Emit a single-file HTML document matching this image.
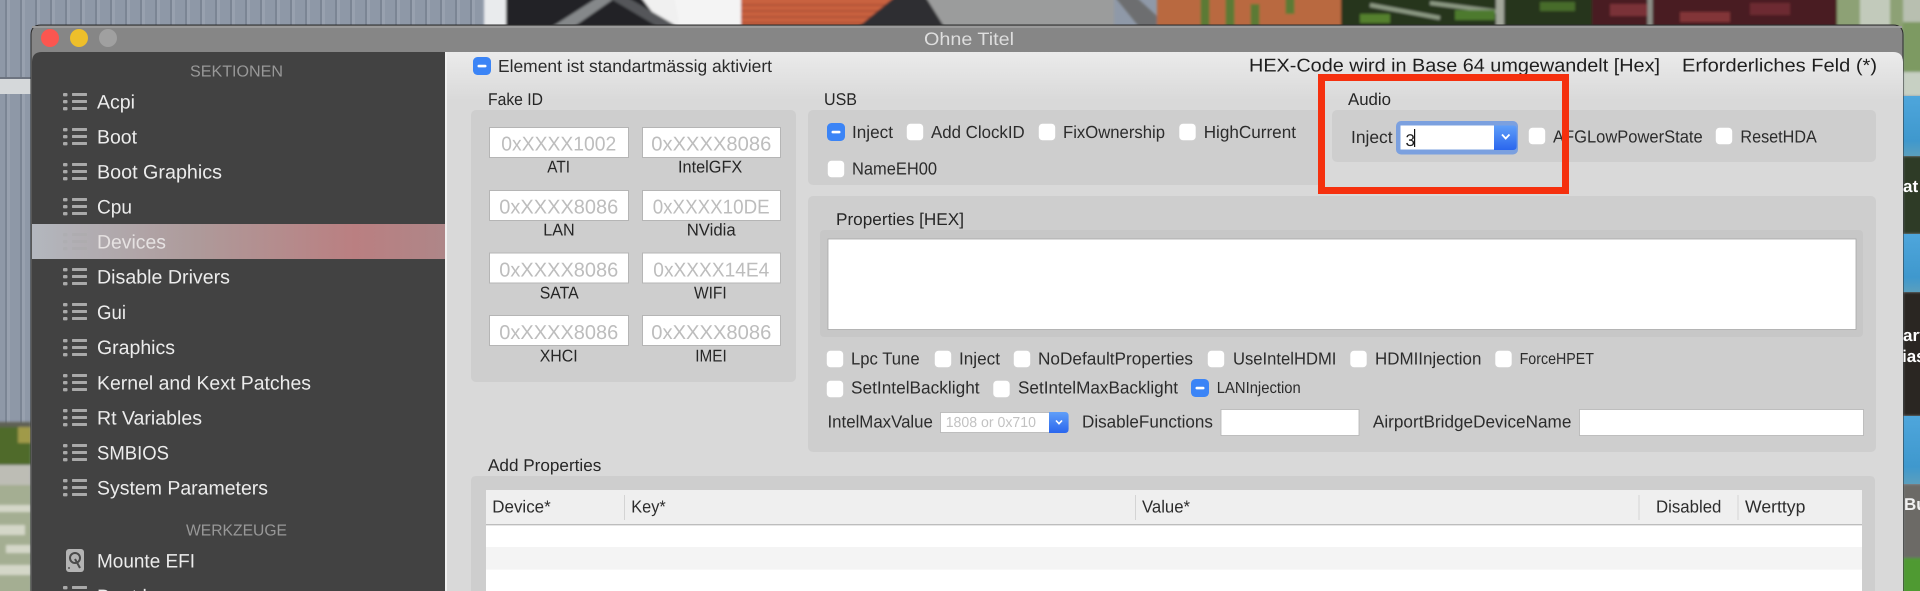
<!DOCTYPE html>
<html lang="de">
<head>
<meta charset="utf-8">
<title>Ohne Titel</title>
<style>
html,body{margin:0;padding:0;background:#8b96a5;width:1920px;height:591px;overflow:hidden}
svg{display:block;position:absolute;left:0;top:0}
text{font-family:"Liberation Sans",sans-serif;text-rendering:geometricPrecision}
.s{font-size:19.5px;fill:#ececec}
.h{font-size:16px;fill:#989898}
.b{font-size:17px;fill:#262626}
.l{font-size:18.5px;fill:#1e1e1e}
.p{font-size:20px;fill:#bdbdbd}
.c{font-size:17.5px;fill:#2c2c2c}
</style>
</head>
<body>
<svg width="1920" height="591" viewBox="0 0 1920 591" xmlns="http://www.w3.org/2000/svg">
<defs>
<pattern id="st" width="15" height="600" patternUnits="userSpaceOnUse" x="-10">
<rect width="15" height="600" fill="#8e98a7"/>
<rect x="0" width="2" height="600" fill="#7b8594"/>
<rect x="2" width="3" height="600" fill="#98a1af"/>
</pattern>
<filter id="bl" x="-20%" y="-20%" width="140%" height="140%"><feGaussianBlur stdDeviation="1.2"/></filter>
<linearGradient id="sel" x1="0" x2="1" y1="0" y2="0">
<stop offset="0" stop-color="#b3b7be"/><stop offset=".4" stop-color="#ae9a9a"/><stop offset=".78" stop-color="#ba7f81"/><stop offset="1" stop-color="#ae8688"/>
</linearGradient>
<linearGradient id="top" x1="0" x2="0" y1="0" y2="1">
<stop offset="0" stop-color="#ebebeb"/><stop offset=".09" stop-color="#d9d9d9"/><stop offset="1" stop-color="#d9d9d9"/>
</linearGradient>
<linearGradient id="btn" x1="0" x2="0" y1="0" y2="1">
<stop offset="0" stop-color="#5f9ef8"/><stop offset="1" stop-color="#2a66ee"/>
</linearGradient>
<linearGradient id="sky" x1="0" x2="0" y1="0" y2="1">
<stop offset="0" stop-color="#4ea6dc"/><stop offset=".75" stop-color="#3f98cd"/><stop offset="1" stop-color="#5b9fbe"/>
</linearGradient>
<symbol id="cb" width="18" height="18" viewBox="0 0 18 18" overflow="visible">
<rect x=".5" y=".5" width="17" height="17" rx="4" fill="#fff" stroke="#d0d0d0" stroke-width=".6"/>
</symbol>
<symbol id="cbb" width="18" height="18" viewBox="0 0 18 18" overflow="visible">
<rect width="18" height="18" rx="4.5" fill="#3b84f6"/>
<rect x="4.5" y="7.8" width="9" height="2.6" rx="1.2" fill="#fff"/>
</symbol>
<symbol id="li" width="24" height="20" viewBox="0 0 24 20" overflow="visible">
<g fill="#a9a9a9">
<rect x="0" y="1" width="4.5" height="3.4" rx="1"/><rect x="9" y="1" width="15" height="3" rx=".6"/>
<rect x="0" y="8" width="4.5" height="3.4" rx="1"/><rect x="9" y="8" width="15" height="3" rx=".6"/>
<rect x="0" y="15" width="4.5" height="3.4" rx="1"/><rect x="9" y="15" width="15" height="3" rx=".6"/>
</g>
</symbol>
</defs>

<!-- photo background -->
<rect width="1920" height="591" fill="#8f99a8"/>
<rect width="484" height="426" fill="url(#st)"/>
<rect x="0" y="79" width="31" height="15" fill="#d5d8da"/>
<rect x="0" y="77" width="31" height="2" fill="#6d7480"/>
<g filter="url(#bl)">
<rect x="484" y="-4" width="24" height="32" fill="#e9ebed"/>
<rect x="506" y="-4" width="236" height="32" fill="#232325"/>
<rect x="674" y="-4" width="70" height="32" fill="#f4f4f4"/>
<path d="M640 -4H674L680 28H664Z" fill="#f0f0f0"/>
<path d="M550 28L600 -4H618L572 28Z" fill="#85888a"/>
<path d="M606 -4H625L680 28H660Z" fill="#55575a"/>
<path d="M741 -4H900L857 28H741Z" fill="#c9623f"/>
<path d="M741 5H895M741 11H887M741 17H875M741 23H862" stroke="#a84d30" stroke-width="1.5"/>
<path d="M896 -4H930L945 28H857Z" fill="#2f2f33"/>
<path d="M925 -4H1114V28H945Z" fill="#9b9c9c"/>
<path d="M1114 -4H1135L1170 28H1140Z" fill="#6d6e70"/>
<rect x="1157" y="-4" width="184" height="32" fill="#b9693f"/>
<path d="M1205 -4V28M1230 -4V28M1255 4V28M1290 -4V14" stroke="#5c7a35" stroke-width="9"/>
<rect x="1341" y="-4" width="251" height="32" fill="#25351c"/>
<path d="M1370 5L1440 18M1430 3L1500 12" stroke="#8d9a84" stroke-width="4"/>
<path d="M1500 -4V28" stroke="#a3a79b" stroke-width="8"/>
<rect x="1455" y="10" width="40" height="10" fill="#4d7a2e"/>
<rect x="1360" y="14" width="30" height="9" fill="#55802f"/>
<rect x="1540" y="2" width="35" height="9" fill="#466c2b"/>
<rect x="1592" y="-4" width="245" height="32" fill="#4a1f20"/>
<rect x="1610" y="4" width="40" height="12" fill="#7a3237"/>
<rect x="1680" y="12" width="50" height="10" fill="#823638"/>
<rect x="1750" y="3" width="40" height="12" fill="#6d2b30"/>
<path d="M1650 -4V28" stroke="#8e8f88" stroke-width="5"/>
<rect x="1837" y="-4" width="90" height="36" fill="#8da174"/>
<rect x="1860" y="-4" width="30" height="32" fill="#c2cabb"/>
</g>
<!-- right strip -->
<g filter="url(#bl)">
<rect x="1903" y="-4" width="20" height="100" fill="#7d9a62"/>
<rect x="1903" y="-4" width="20" height="26" fill="#b8bfb0"/>
<rect x="1903" y="72" width="20" height="24" fill="#c7d0c3"/>
<rect x="1903" y="156" width="20" height="78" fill="#2e3a28"/>
<rect x="1903" y="292" width="20" height="124" fill="#292623"/>
<rect x="1903" y="484" width="20" height="74" fill="#6c6a66"/>
<rect x="1903" y="558" width="20" height="36" fill="#4f9a30"/>
</g>
<rect x="1903" y="96" width="17" height="60" fill="url(#sky)"/>
<rect x="1903" y="234" width="17" height="58" fill="url(#sky)"/>
<rect x="1903" y="416" width="17" height="68" fill="url(#sky)"/>
<text x="1903" y="192" font-size="17" font-weight="700" fill="#fff">at</text>
<text x="1903" y="341" font-size="17" font-weight="700" fill="#fff">ary</text>
<text x="1902" y="362" font-size="17" font-weight="700" fill="#fff">ias</text>
<text x="1904" y="510" font-size="17" font-weight="700" fill="#f0f0f0">Bu</text>
<!-- left lower -->
<g filter="url(#bl)">
<rect x="-4" y="422" width="35" height="5" fill="#5f6155"/>
<rect x="-4" y="427" width="35" height="40" fill="#4f6a2a"/>
<rect x="18" y="427" width="13" height="16" fill="#a09a4a"/>
<rect x="-4" y="465" width="35" height="20" fill="#bdbdb5"/>
<rect x="-4" y="485" width="35" height="110" fill="#a4ae92"/>
<rect x="-4" y="505" width="35" height="7" fill="#d4d7c8"/>
<rect x="-4" y="525" width="29" height="10" fill="#d4d7c8"/>
<rect x="6" y="545" width="25" height="8" fill="#d4d7c8"/>
<rect x="-4" y="565" width="35" height="10" fill="#d4d7c8"/>
</g>

<!-- window -->
<path d="M31 591V35Q31 25 41 25H1893Q1903 25 1903 35V591Z" fill="#868686"/>
<path d="M31 591V35Q31 25 41 25H1893Q1903 25 1903 35V591" fill="none" stroke="#2b2b2b" stroke-width="1"/>
<rect x="32" y="26" width="1870" height="2" fill="#9a9a9a"/>
<circle cx="50" cy="38" r="9" fill="#fc5650"/>
<circle cx="79" cy="38" r="9" fill="#eebf2b"/>
<circle cx="108" cy="38" r="9" fill="#a0a0a0"/>
<text x="924" y="45" font-size="18" fill="#dedede" textLength="90" lengthAdjust="spacingAndGlyphs">Ohne Titel</text>

<!-- sidebar -->
<path d="M32 591V62Q32 52 42 52H445V591Z" fill="#424242"/>
<rect x="445" y="52" width="2" height="539" fill="#f0f0f0"/>
<rect x="32" y="224" width="413" height="35" fill="url(#sel)"/>
<text class="h" x="190" y="76.3" textLength="93" lengthAdjust="spacingAndGlyphs">SEKTIONEN</text>
<text class="h" x="186" y="535.7" textLength="101" lengthAdjust="spacingAndGlyphs">WERKZEUGE</text>

<use href="#li" x="63" y="92"/><text class="s" x="97" y="108.3" textLength="38" lengthAdjust="spacingAndGlyphs">Acpi</text>
<use href="#li" x="63" y="127"/><text class="s" x="97" y="143.5" textLength="40" lengthAdjust="spacingAndGlyphs">Boot</text>
<use href="#li" x="63" y="162"/><text class="s" x="97" y="178.5" textLength="125" lengthAdjust="spacingAndGlyphs">Boot Graphics</text>
<use href="#li" x="63" y="197"/><text class="s" x="97" y="213.5" textLength="35" lengthAdjust="spacingAndGlyphs">Cpu</text>
<use href="#li" x="63" y="232" opacity=".35"/><text class="s" x="97" y="248.7" textLength="69" lengthAdjust="spacingAndGlyphs" style="fill:#e6e2e2">Devices</text>
<use href="#li" x="63" y="267"/><text class="s" x="97" y="283.7" textLength="133" lengthAdjust="spacingAndGlyphs">Disable Drivers</text>
<use href="#li" x="63" y="302"/><text class="s" x="97" y="319" textLength="29" lengthAdjust="spacingAndGlyphs">Gui</text>
<use href="#li" x="63" y="338"/><text class="s" x="97" y="354" textLength="78" lengthAdjust="spacingAndGlyphs">Graphics</text>
<use href="#li" x="63" y="373"/><text class="s" x="97" y="389.3" textLength="214" lengthAdjust="spacingAndGlyphs">Kernel and Kext Patches</text>
<use href="#li" x="63" y="408"/><text class="s" x="97" y="424.3" textLength="105" lengthAdjust="spacingAndGlyphs">Rt Variables</text>
<use href="#li" x="63" y="443"/><text class="s" x="97" y="459.7" textLength="72" lengthAdjust="spacingAndGlyphs">SMBIOS</text>
<use href="#li" x="63" y="478"/><text class="s" x="97" y="494.7" textLength="171" lengthAdjust="spacingAndGlyphs">System Parameters</text>
<rect x="66" y="549" width="18" height="23" rx="3" fill="#b4b4b4"/>
<circle cx="75" cy="558" r="5" fill="none" stroke="#4a4a4a" stroke-width="2"/>
<path d="M75 559L80 568" stroke="#4a4a4a" stroke-width="2"/>
<circle cx="69" cy="568" r="1" fill="#555"/>
<text class="s" x="97" y="567.7" textLength="98" lengthAdjust="spacingAndGlyphs">Mounte EFI</text>
<use href="#li" x="63" y="585"/><text class="s" x="97" y="603">Boot.log</text>

<!-- content -->
<path d="M447 591V52H1893Q1903 52 1903 62V591Z" fill="url(#top)"/>
<use href="#cbb" x="473" y="57"/>
<text class="c" x="498" y="72" textLength="274" lengthAdjust="spacingAndGlyphs">Element ist standartmässig aktiviert</text>
<text class="l" x="1249" y="71.7" textLength="411" lengthAdjust="spacingAndGlyphs">HEX-Code wird in Base 64 umgewandelt [Hex]</text>
<text class="l" x="1682" y="71.7" textLength="195" lengthAdjust="spacingAndGlyphs">Erforderliches Feld (*)</text>

<text class="b" x="488" y="105" textLength="55" lengthAdjust="spacingAndGlyphs">Fake ID</text>
<text class="b" x="824" y="105" textLength="33" lengthAdjust="spacingAndGlyphs">USB</text>

<!-- Fake ID panel -->
<rect x="471" y="110" width="325" height="272" rx="5" fill="#cecece"/>
<g fill="#fff" stroke="#b5b5b5" stroke-width="1">
<rect x="489.5" y="127.5" width="139" height="30"/><rect x="642.5" y="127.5" width="138" height="30"/>
<rect x="489.5" y="190.5" width="139" height="30"/><rect x="642.5" y="190.5" width="138" height="30"/>
<rect x="489.5" y="253" width="139" height="30"/><rect x="642.5" y="253" width="138" height="30"/>
<rect x="489.5" y="315.5" width="139" height="30"/><rect x="642.5" y="315.5" width="138" height="30"/>
</g>
<text class="p" x="501.3" y="150.7" textLength="115" lengthAdjust="spacingAndGlyphs">0xXXXX1002</text>
<text class="p" x="651.3" y="150.7" textLength="120" lengthAdjust="spacingAndGlyphs">0xXXXX8086</text>
<text class="p" x="499.3" y="213.3" textLength="119" lengthAdjust="spacingAndGlyphs">0xXXXX8086</text>
<text class="p" x="652.7" y="213.3" textLength="117" lengthAdjust="spacingAndGlyphs">0xXXXX10DE</text>
<text class="p" x="499.3" y="276.3" textLength="119" lengthAdjust="spacingAndGlyphs">0xXXXX8086</text>
<text class="p" x="653.3" y="276.3" textLength="116" lengthAdjust="spacingAndGlyphs">0xXXXX14E4</text>
<text class="p" x="499.3" y="339" textLength="119" lengthAdjust="spacingAndGlyphs">0xXXXX8086</text>
<text class="p" x="651.3" y="339" textLength="120" lengthAdjust="spacingAndGlyphs">0xXXXX8086</text>
<text class="b" x="547.3" y="172.5" textLength="22.7" lengthAdjust="spacingAndGlyphs">ATI</text>
<text class="b" x="678" y="172.5" textLength="64.3" lengthAdjust="spacingAndGlyphs">IntelGFX</text>
<text class="b" x="543.3" y="235.5" textLength="31.4" lengthAdjust="spacingAndGlyphs">LAN</text>
<text class="b" x="686.7" y="235.5" textLength="49" lengthAdjust="spacingAndGlyphs">NVidia</text>
<text class="b" x="539.7" y="298.5" textLength="39" lengthAdjust="spacingAndGlyphs">SATA</text>
<text class="b" x="694" y="298.5" textLength="32.7" lengthAdjust="spacingAndGlyphs">WIFI</text>
<text class="b" x="539.7" y="361.3" textLength="38" lengthAdjust="spacingAndGlyphs">XHCI</text>
<text class="b" x="695.3" y="361.3" textLength="31.4" lengthAdjust="spacingAndGlyphs">IMEI</text>

<!-- USB panel -->
<rect x="808" y="110" width="514" height="75" rx="5" fill="#cecece"/>
<use href="#cbb" x="827" y="123"/><text class="c" x="852" y="138" textLength="41" lengthAdjust="spacingAndGlyphs">Inject</text>
<use href="#cb" x="906" y="123"/><text class="c" x="931" y="138" textLength="93.7" lengthAdjust="spacingAndGlyphs">Add ClockID</text>
<use href="#cb" x="1038" y="123"/><text class="c" x="1063" y="138" textLength="102" lengthAdjust="spacingAndGlyphs">FixOwnership</text>
<use href="#cb" x="1178.5" y="123"/><text class="c" x="1203.7" y="138" textLength="92.3" lengthAdjust="spacingAndGlyphs">HighCurrent</text>
<use href="#cb" x="827" y="160"/><text class="c" x="852" y="174.5" textLength="85" lengthAdjust="spacingAndGlyphs">NameEH00</text>

<!-- Audio -->
<rect x="1332" y="110" width="544" height="52" rx="5" fill="#cecece"/>
<text class="b" x="1348" y="105" textLength="43" lengthAdjust="spacingAndGlyphs">Audio</text>
<text class="c" x="1351" y="143" textLength="41.6" lengthAdjust="spacingAndGlyphs">Inject</text>
<rect x="1396" y="121" width="122" height="33.5" rx="5" fill="#7ba0df"/>
<rect x="1400.5" y="125.5" width="94" height="24" fill="#fff"/>
<path d="M1494 125.5H1513Q1516.7 125.5 1516.7 129V146Q1516.7 150 1513 150H1494Z" fill="url(#btn)"/>
<path d="M1502 134.5L1505.7 138.5L1509.5 134.5" fill="none" stroke="#fff" stroke-width="1.8"/>
<text x="1405.5" y="146" font-size="17" fill="#1e1e1e">3</text>
<rect x="1414" y="129" width="1.2" height="18" fill="#111"/>
<use href="#cb" x="1528" y="127"/><text class="c" x="1553" y="142.3" textLength="149.7" lengthAdjust="spacingAndGlyphs">AFGLowPowerState</text>
<use href="#cb" x="1715" y="127"/><text class="c" x="1740.4" y="142.3" textLength="76.4" lengthAdjust="spacingAndGlyphs">ResetHDA</text>

<!-- Properties panel -->
<rect x="808" y="196" width="1068" height="256" rx="5" fill="#cecece"/>
<text class="b" x="836" y="225" textLength="128" lengthAdjust="spacingAndGlyphs">Properties [HEX]</text>
<rect x="820" y="230" width="1043" height="107" rx="4" fill="#c7c7c7"/>
<rect x="828" y="239" width="1028" height="90.5" fill="#fff" stroke="#a8a8a8" stroke-width=".8"/>

<use href="#cb" x="826" y="350"/><text class="c" x="851" y="364.3" textLength="68.6" lengthAdjust="spacingAndGlyphs">Lpc Tune</text>
<use href="#cb" x="934" y="350"/><text class="c" x="959" y="364.3" textLength="41" lengthAdjust="spacingAndGlyphs">Inject</text>
<use href="#cb" x="1013" y="350"/><text class="c" x="1038" y="364.3" textLength="155" lengthAdjust="spacingAndGlyphs">NoDefaultProperties</text>
<use href="#cb" x="1207" y="350"/><text class="c" x="1233" y="364.3" textLength="103.4" lengthAdjust="spacingAndGlyphs">UseIntelHDMI</text>
<use href="#cb" x="1349.5" y="350"/><text class="c" x="1375" y="364.3" textLength="106.4" lengthAdjust="spacingAndGlyphs">HDMIInjection</text>
<use href="#cb" x="1494.5" y="350"/><text class="c" x="1519.6" y="364" textLength="74.4" lengthAdjust="spacingAndGlyphs" style="font-size:16px">ForceHPET</text>
<use href="#cb" x="826" y="380"/><text class="c" x="851" y="393.7" textLength="128.6" lengthAdjust="spacingAndGlyphs">SetIntelBacklight</text>
<use href="#cb" x="992.5" y="380"/><text class="c" x="1018" y="393.7" textLength="160" lengthAdjust="spacingAndGlyphs">SetIntelMaxBacklight</text>
<use href="#cbb" x="1191" y="379"/><text class="c" x="1216.8" y="393" textLength="83.9" lengthAdjust="spacingAndGlyphs" style="font-size:16px">LANInjection</text>

<text class="c" x="827.5" y="427.3" textLength="105.4" lengthAdjust="spacingAndGlyphs">IntelMaxValue</text>
<rect x="940.5" y="412.5" width="110" height="20" fill="#fff" stroke="#b5b5b5" stroke-width=".8"/>
<text x="945.7" y="427" font-size="14.5" fill="#c2c2c2" textLength="90.3" lengthAdjust="spacingAndGlyphs">1808 or 0x710</text>
<path d="M1049 412H1065Q1068.6 412 1068.6 416V429Q1068.6 433 1065 433H1049Z" fill="url(#btn)"/>
<path d="M1056 420.5L1059 423.7L1062 420.5" fill="none" stroke="#fff" stroke-width="1.6"/>
<text class="c" x="1082" y="427.3" textLength="130.9" lengthAdjust="spacingAndGlyphs">DisableFunctions</text>
<rect x="1221" y="409.5" width="138" height="26" fill="#fff" stroke="#b5b5b5" stroke-width=".8"/>
<text class="c" x="1372.9" y="427.3" textLength="198.5" lengthAdjust="spacingAndGlyphs">AirportBridgeDeviceName</text>
<rect x="1579.5" y="409.5" width="284" height="26" fill="#fff" stroke="#b5b5b5" stroke-width=".8"/>

<!-- Add Properties -->
<text class="b" x="488" y="471" textLength="113.3" lengthAdjust="spacingAndGlyphs">Add Properties</text>
<path d="M471 591V481Q471 476 476 476H1870Q1875 476 1875 481V591Z" fill="#cecece"/>
<rect x="486" y="490" width="1376" height="34" fill="#efefef"/>
<rect x="486" y="524" width="1376" height="1.4" fill="#bdbdbd"/>
<rect x="486" y="525.4" width="1376" height="22" fill="#fff"/>
<rect x="486" y="547.4" width="1376" height="22" fill="#f4f4f4"/>
<rect x="486" y="569.4" width="1376" height="22" fill="#fff"/>
<g fill="#d4d4d4">
<rect x="624" y="495" width="1" height="25"/><rect x="1135" y="495" width="1" height="25"/><rect x="1638.5" y="495" width="1" height="25"/><rect x="1737.5" y="495" width="1" height="25"/>
</g>
<text class="c" x="492.3" y="512.7" textLength="58.4" lengthAdjust="spacingAndGlyphs">Device*</text>
<text class="c" x="631.3" y="512.7" textLength="34.4" lengthAdjust="spacingAndGlyphs">Key*</text>
<text class="c" x="1142" y="512.7" textLength="48" lengthAdjust="spacingAndGlyphs">Value*</text>
<text class="c" x="1656" y="512.7" textLength="65.4" lengthAdjust="spacingAndGlyphs">Disabled</text>
<text class="c" x="1745" y="512.7" textLength="60.4" lengthAdjust="spacingAndGlyphs">Werttyp</text>

<!-- red annotation box -->
<rect x="1321.5" y="77.5" width="244" height="113" fill="none" stroke="#f5300e" stroke-width="7"/>
</svg>
</body>
</html>
